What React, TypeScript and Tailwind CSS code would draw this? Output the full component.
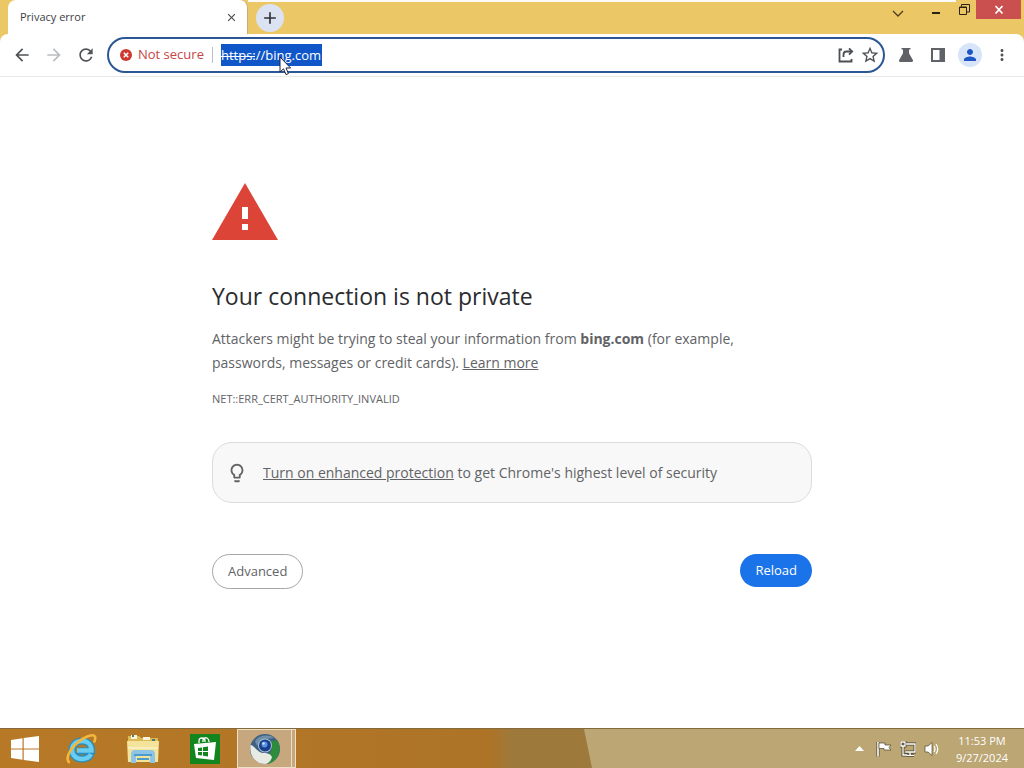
import { ReactNode, useState } from "react";
import {
    MdAdd,
    MdArrowBack,
    MdArrowForward,
    MdClose,
    MdLightbulbOutline,
    MdMoreVert,
    MdPerson,
    MdRefresh,
    MdStarBorder,
} from "react-icons/md";

type IconButtonProps = {
    label: string,
    className?: string,
    children: ReactNode,
};

const IconButton = ({label, className = "h-6 w-6", children}: IconButtonProps) => (
    <button aria-label={label} className={"flex shrink-0 items-center justify-center rounded-full " + className}>
        {children}
    </button>
);

const ShareIcon = () => (
    <svg width="18" height="18" viewBox="0 0 18 18" fill="none" stroke="#4b4e52" strokeWidth="1.8">
        <path d="M5 3.5H2.5V15.5H14.5V13"/>
        <path d="M6.5 11V8.5Q6.5 5.5 9.5 5.5H14.5"/>
        <path d="M12 2.3L15.2 5.5L12 8.7"/>
    </svg>
);

const FlaskIcon = () => (
    <svg width="18" height="18" viewBox="0 0 18 18" fill="#5f6368">
        <path d="M4.5 2H13.5V3.6H12V7.2L16 14.3Q16.6 16 14.7 16H3.3Q1.4 16 2 14.3L6 7.2V3.6H4.5Z"/>
    </svg>
);

const PanelIcon = () => (
    <svg width="16" height="16" viewBox="0 0 16 16">
        <path fill="#5f6368" fillRule="evenodd" d="M1 1H15V15H1ZM3 3V13H9.5V3Z"/>
    </svg>
);

const NotSecureIcon = () => (
    <svg width="12" height="12" viewBox="0 0 12 12" className="shrink-0">
        <circle cx="6" cy="6" r="6" fill="#cf3830"/>
        <path d="M3.8 3.8L8.2 8.2M8.2 3.8L3.8 8.2" stroke="#fff" strokeWidth="1.6"/>
    </svg>
);

const Cursor = () => (
    <svg width="12" height="20" viewBox="0 0 12 20" className="pointer-events-none absolute left-[58px] top-3">
        <path d="M1 1V16L4.5 12.8L7 18.6L9.4 17.6L7 12H11.6Z" fill="#fff" stroke="#1c2340" strokeWidth="1"/>
    </svg>
);

const TitleBar = () => (
    <header className="flex h-[34px] items-stretch bg-[#ecc766] pl-2">
        <div className="flex w-[240px] items-center rounded-t-lg border-r border-[#c9ad74] bg-white pl-3 pr-2">
            <span className="grow text-[11px] text-[#3c4043]">Privacy error</span>
            <IconButton label="Close tab" className="h-4 w-4">
                <MdClose size={13} color="#45494d" stroke="#45494d"/>
            </IconButton>
        </div>
        <div className="flex grow items-center border-t-2 border-[#fbfaf6] pl-2">
            <IconButton label="New tab" className="h-7 w-7 bg-[#dbe3f3]">
                <MdAdd size={20} color="#2f3236"/>
            </IconButton>
        </div>
        <div className="flex items-start border-t-2 border-[#fbfaf6]">
            <button aria-label="Search tabs" className="flex h-6 w-9 items-center justify-center">
                <svg width="12" height="8" viewBox="0 0 12 8" fill="none" stroke="#4d3c1c" strokeWidth="1.3">
                    <path d="M1 1L6 6L11 1"/>
                </svg>
            </button>
        </div>
        <div className="flex items-start">
            <button aria-label="Minimize" className="flex h-6 w-10 items-center justify-center border-t-2 border-[#fbfaf6]">
                <span className="h-[2px] w-2 bg-[#2b2112]"></span>
            </button>
            <button aria-label="Restore" className="flex h-[19px] w-4 items-center justify-center">
                <svg width="11" height="11" viewBox="0 0 11 11" fill="none" stroke="#2b2112">
                    <path d="M0.5 3H7.5V10.5H0.5ZM0 3.5H8M2.5 2.5V0.5H10.5V8H8"/>
                </svg>
            </button>
            <button aria-label="Close" className="ml-1 mr-[3px] flex h-[19px] w-[45px] items-center justify-center bg-[#c9504e]">
                <svg width="10" height="10" viewBox="0 0 10 10" stroke="#fff" strokeWidth="1.8">
                    <path d="M1.5 1L8.5 8.5M8.5 1L1.5 8.5"/>
                </svg>
            </button>
        </div>
    </header>
);

const Toolbar = () => {
    const [url, setUrl] = useState("https://bing.com");

    return (
        <div className="bg-[#ecc766]">
            <nav className="flex h-[43px] items-center rounded-t-lg border-b border-[#e8e8e8] bg-white pl-[10px] pr-[10px]">
                <div className="flex gap-2">
                    <IconButton label="Back"><MdArrowBack size={20} color="#505357"/></IconButton>
                    <IconButton label="Forward"><MdArrowForward size={20} color="#bbbdc0"/></IconButton>
                    <IconButton label="Reload page"><MdRefresh size={20} color="#505357"/></IconButton>
                </div>
                {/* ADDRESS BAR */}
                <div className="ml-[9px] flex h-9 grow items-center rounded-full border-2 border-[#2c5795] pl-[11px] pr-[1px]">
                    <NotSecureIcon/>
                    <span className="ml-[6px] text-[13px] text-[#c6453f]">Not secure</span>
                    <span className="mx-2 h-4 w-px bg-[#b9bfc9]"></span>
                    <div className="relative flex">
                        <input
                            aria-label="Address"
                            value={url}
                            onChange={(e) => setUrl(e.target.value)}
                            className="field-sizing-content h-[22px] bg-[#0f56c8] pr-px text-[13px] text-white outline-none"
                        />
                        <span className="pointer-events-none absolute left-0 top-3 h-px w-[34px] bg-white"></span>
                        <Cursor/>
                    </div>
                    <div className="ml-auto flex">
                        <IconButton label="Share"><ShareIcon/></IconButton>
                        <IconButton label="Bookmark"><MdStarBorder size={20} color="#4b4e52"/></IconButton>
                    </div>
                </div>
                <div className="ml-[9px] flex items-center gap-2">
                    <IconButton label="Experiments"><FlaskIcon/></IconButton>
                    <IconButton label="Side panel"><PanelIcon/></IconButton>
                    <IconButton label="Profile" className="h-6 w-6 bg-[#d8e5f9]"><MdPerson size={18} color="#1e57c4"/></IconButton>
                    <IconButton label="Menu"><MdMoreVert size={18} color="#505357"/></IconButton>
                </div>
            </nav>
        </div>
    );
};

const Warning = () => (
    <main className="grow bg-white px-6">
        <div className="mx-auto max-w-[600px] pt-[106px] text-[#626366]">
            <svg width="66" height="57" viewBox="0 0 66 57">
                <path d="M33 0L66 57H0Z" fill="#db4437"/>
                <path d="M30 24H36V36H30ZM30 41H36V47H30Z" fill="#fff"/>
            </svg>
            <h1 className="mt-10 text-[23px] leading-8 text-[#2b2c2f]">Your connection is not private</h1>
            <p className="mt-[15px] pr-12 text-[14px] leading-6">
                Attackers might be trying to steal your information from <strong>bing.com</strong> (for example,
                passwords, messages or credit cards). <a href="#learn" className="underline">Learn more</a>
            </p>
            <div className="mt-3 text-[11px] leading-6">NET::ERR_CERT_AUTHORITY_INVALID</div>
            <div className="mt-[31px] flex h-[61px] items-center rounded-[20px] border border-[#dcdcde] bg-[#f8f8f8] px-[13px]">
                <MdLightbulbOutline size={22} className="shrink-0"/>
                <p className="ml-[15px] text-[14px] leading-6">
                    <a href="#protection" className="underline">Turn on enhanced protection</a> to get Chrome's highest level of security
                </p>
            </div>
            <div className="mt-[51px] flex items-start justify-between">
                <button className="h-[35px] rounded-full border border-[#a5a6a9] px-[15px] text-[13px]">Advanced</button>
                <button className="h-[33px] rounded-full bg-[#1a73e8] px-[15px] text-[13px] text-white">Reload</button>
            </div>
        </div>
    </main>
);

const WindowsLogo = () => (
    <svg width="28" height="26" viewBox="0 0 28 26" fill="#fff">
        <path d="M0 4L11.5 2.2V12.4H0ZM12.7 2L28 0V12.4H12.7ZM0 13.6H11.5V23.8L0 22ZM12.7 13.6H28V26L12.7 24Z"/>
    </svg>
);

const ExplorerLogo = () => (
    <svg width="32" height="32" viewBox="0 0 32 32" fill="none">
        <path d="M26 21C24 25 20.5 26 17 26C11 26 7 22 7 17C7 12 11 8 17 8C23 8 26.5 12 26.5 18H12" stroke="#238fc4" strokeWidth="7"/>
        <path d="M26 21C24 25 20.5 26 17 26C11 26 7 22 7 17C7 12 11 8 17 8C23 8 26.5 12 26.5 17.5H12" stroke="#6bcdf0" strokeWidth="4.5"/>
        <path d="M5 29.5C0 28 3 18 12 10C20 3 28.5 .5 30 3.5C30.8 5.5 30 7.5 29 9.5" stroke="#f3b83b" strokeWidth="2.6"/>
    </svg>
);

const FolderLogo = () => (
    <svg width="32" height="30" viewBox="0 0 32 30">
        <path d="M1 2H12L14 4H31V28H1Z" fill="#dcbb55"/>
        <path d="M4 1H10V5H4ZM16 3H23V6H16Z" fill="#f8f3dc"/>
        <path d="M5 1H7V3H5ZM25 5H28V7H25Z" fill="#477f6c"/>
        <path d="M0 7H32L31 28H1Z" fill="#f4e39a"/>
        <path d="M1 13H31V15H1Z" fill="#f9efbd"/>
        <path d="M4 29V20Q4 16 8 16H24Q28 16 28 20V29H23V22H9V29Z" fill="#8cc5e5"/>
        <path d="M7 20H25V22H7ZM10 24H22V26H10Z" fill="#4a9ccc"/>
    </svg>
);

const StoreLogo = () => (
    <svg width="30" height="30" viewBox="0 0 30 30">
        <path d="M0 0H30V30H0Z" fill="#12851f"/>
        <path d="M9 9V7Q9 4 12 4Q15 4 15 7V8M13 8V6Q14 3 17 4Q19 5 19 8" stroke="#fff" strokeWidth="1.3" fill="none"/>
        <path d="M4 10L26 8L24 26L6 24Z" fill="#fff"/>
        <path d="M8 14L12 13.5V17H8ZM13 13.3L18 12.6V17H13ZM8 18H12V21.5L8 21ZM13 18H18V22.4L13 21.7Z" fill="#12851f"/>
    </svg>
);

const ChromiumLogo = () => (
    <svg width="32" height="32" viewBox="0 0 32 32">
        <circle cx="16" cy="16" r="15" fill="#3f6282"/>
        <path d="M22 8L28.5 7.5C33.5 17 29 29 18 31L16 30L23 16Z" fill="#2d8c3c"/>
        <path d="M1.5 12C5 12 8 19 14 20C20 20 22 22 23 24C22 28 19 31 16 31C6 31 0 22 1.5 12Z" fill="#e8ebe4"/>
        <path d="M6 8C10 2 20 1 25 5L16 6Q10 7 8 13Z" fill="#6f8ea7"/>
        <circle cx="16" cy="12.5" r="7" fill="#a9bfd3"/>
        <circle cx="16" cy="12.5" r="6" fill="#173f8b"/>
        <circle cx="15.5" cy="11.5" r="3" fill="#5c92e0"/>
        <circle cx="14.5" cy="10.5" r="1.2" fill="#cfe2fa"/>
    </svg>
);

const TrayIcons = () => (
    <div className="flex items-center gap-2">
        <button aria-label="Show hidden icons" className="mr-1">
            <svg width="9" height="5" viewBox="0 0 9 5"><path d="M0 5L4.5 0L9 5Z" fill="#fff"/></svg>
        </button>
        <button aria-label="Action center">
            <svg width="16" height="16" viewBox="0 0 16 16">
                <path d="M2 1V15.5" stroke="#4f452d" strokeWidth="3"/>
                <path d="M2 1V15.5" stroke="#fff" strokeWidth="1.6"/>
                <path d="M3 2H9V4H15L13 6.5L15 9H8V7.5H3Z" fill="#fff" stroke="#4f452d" strokeWidth=".7"/>
            </svg>
        </button>
        <button aria-label="Network">
            <svg width="16" height="16" viewBox="0 0 16 16" fill="none">
                <path d="M6 3H15V11H5.5M10 11V14M6.5 14.3H14M1 1H5V5H1ZM3 5V14H7" stroke="#4f452d" strokeWidth="3"/>
                <path d="M6 3H15V11H5.5M10 11V14M6.5 14.3H14M1 1H5V5H1ZM3 5V14H7" stroke="#fff" strokeWidth="1.3"/>
            </svg>
        </button>
        <button aria-label="Volume">
            <svg width="16" height="16" viewBox="0 0 16 16" fill="none">
                <path d="M1 5H4L8 1.5V14.5L4 11H1Z" fill="#fff" stroke="#4f452d" strokeWidth=".7"/>
                <path d="M10 5Q12 8 10 11M12 3Q15.5 8 12 13" stroke="#fff" strokeWidth="1.2"/>
            </svg>
        </button>
    </div>
);

const Taskbar = () => (
    <footer className="relative flex h-10 items-center border-t border-[#826a3c] bg-linear-to-r from-[#b77926] from-0% via-[#ad7327] via-48% to-[#9d7a3c] to-50%">
        {/* WALLPAPER SHOWING THROUGH */}
        <svg className="absolute inset-y-0 right-0 h-full w-[43%]" viewBox="0 0 440 40" preserveAspectRatio="none">
            <path d="M0 0H440V40H8Z" fill="#bba674"/>
        </svg>
        <div className="relative flex h-full grow items-center">
            <button aria-label="Start" className="flex w-[50px] justify-center"><WindowsLogo/></button>
            <button aria-label="Internet Explorer" className="flex w-[62px] justify-center"><ExplorerLogo/></button>
            <button aria-label="File Explorer" className="flex w-[62px] justify-center"><FolderLogo/></button>
            <button aria-label="Store" className="flex w-[62px] justify-center"><StoreLogo/></button>
            <button aria-label="Chromium" className="ml-[1px] flex h-full w-[59px] border border-[#eee0c4] bg-[#c7a77e]">
                <span className="flex h-full w-[54px] items-center justify-center border-r border-[#eee0c4]"><ChromiumLogo/></span>
            </button>
        </div>
        <div className="relative flex items-center pr-4">
            <TrayIcons/>
            <div className="ml-4 text-center text-[11px] leading-[17px] text-white">
                <div>11:53 PM</div>
                <div>9/27/2024</div>
            </div>
        </div>
    </footer>
);

const App = () => (
    <div className="flex min-h-screen flex-col bg-white font-['Open_Sans','Noto_Sans',sans-serif]">
        <TitleBar/>
        <Toolbar/>
        <Warning/>
        <Taskbar/>
    </div>
);

export default App;
